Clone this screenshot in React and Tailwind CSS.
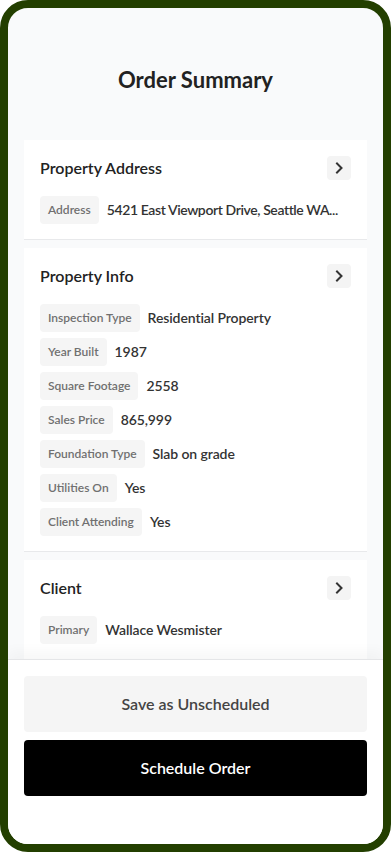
import React from "react";

const font = { fontFamily: "Lato, 'Noto Sans', sans-serif" };

function Chevron() {
  return (
    <button className="flex h-6 w-6 items-center justify-center rounded bg-[#f4f4f4]">
      <svg width="10" height="12" viewBox="0 0 10 12" fill="none">
        <path d="M3 1.5 L7.5 6 L3 10.5" stroke="#333" strokeWidth="2" strokeLinecap="square" />
      </svg>
    </button>
  );
}

function Row({ label, value, tight }) {
  return (
    <div className="flex h-7 items-center">
      <div className="flex h-7 shrink-0 items-center rounded bg-[#f5f5f5] px-2 text-[12px] font-semibold text-[#707070]">
        {label}
      </div>
      <div
        className={
          tight
            ? "ml-2 min-w-0 whitespace-nowrap pb-[2px] text-[14px] font-semibold tracking-[-0.4px] text-[#333]"
            : "ml-2 min-w-0 whitespace-nowrap pb-[2px] text-[14px] font-semibold tracking-[-0.1px] text-[#333]"
        }
      >
        {value}
      </div>
    </div>
  );
}

function Card({ title, rows, tight }) {
  return (
    <div className="mx-4 mb-2 border-b border-[#e8e9eb] bg-white px-4 pt-4 pb-[15px]">
      <div className="flex h-6 items-center justify-between">
        <div className="text-[16px] font-semibold text-[#222]">{title}</div>
        <Chevron />
      </div>
      <div className="mt-4 flex flex-col gap-1.5">
        {rows.map((r) => (
          <Row key={r[0]} label={r[0]} value={r[1]} tight={tight} />
        ))}
      </div>
    </div>
  );
}

export default function App() {
  return (
    <div className="h-[852px] w-[391px] bg-white" style={font}>
      <div className="flex h-full w-full flex-col overflow-hidden rounded-[28px] border-8 border-[#233f00] bg-[#f9fafb]">
        <div className="min-h-0 flex-1 overflow-hidden">
          <div className="pt-[58px] pb-[46px] text-center text-[22px] leading-7 font-bold text-[#222]">
            Order Summary
          </div>
          <Card tight title="Property Address" rows={[["Address", "5421 East Viewport Drive, Seattle WA..."]]} />
          <Card
            title="Property Info"
            rows={[
              ["Inspection Type", "Residential Property"],
              ["Year Built", "1987"],
              ["Square Footage", "2558"],
              ["Sales Price", "865,999"],
              ["Foundation Type", "Slab on grade"],
              ["Utilities On", "Yes"],
              ["Client Attending", "Yes"],
            ]}
          />
          <Card title="Client" rows={[["Primary", "Wallace Wesmister"]]} />
        </div>
        <div className="relative shrink-0 border-t border-[#e5e6e8] bg-white px-4 pt-4 pb-12 shadow-[0_-8px_12px_rgba(0,0,0,0.03)]">
          <button className="flex h-14 w-full items-center justify-center rounded bg-[#f5f5f5] text-[16px] font-semibold text-[#444]">
            Save as Unscheduled
          </button>
          <button className="mt-2 flex h-14 w-full items-center justify-center rounded bg-black text-[16px] font-semibold text-white">
            Schedule Order
          </button>
        </div>
      </div>
    </div>
  );
}
